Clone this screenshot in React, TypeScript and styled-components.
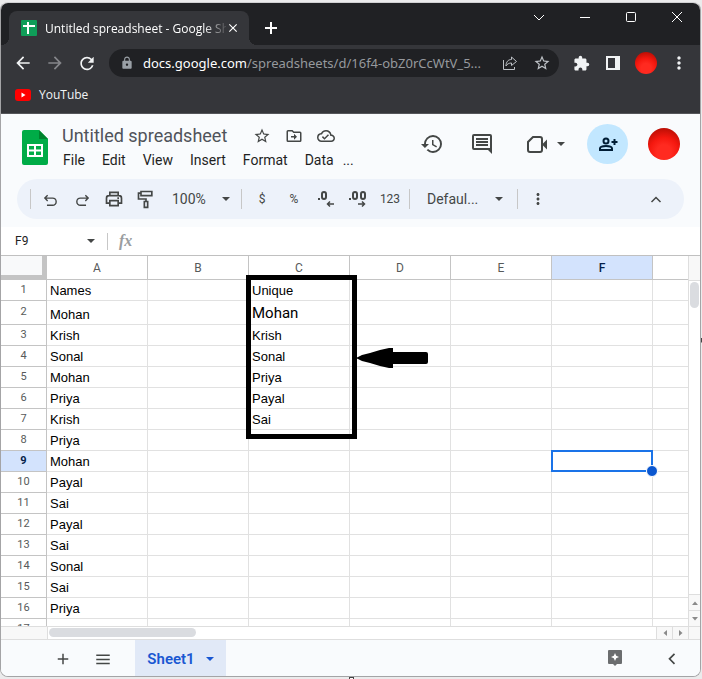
import React from "react";
import styled, { createGlobalStyle, css } from "styled-components";
import {
  MdAdd,
  MdArrowBack,
  MdArrowForward,
  MdClose,
  MdExtension,
  MdHistory,
  MdLock,
  MdMoreVert,
  MdOutlineCloudDone,
  MdRefresh,
  MdStarBorder,
} from "react-icons/md";

const UI = `"Open Sans", "Noto Sans", sans-serif`;
const ROBOTO = `Roboto, "Liberation Sans", sans-serif`;
const ARIAL = `"Liberation Sans", Arial, sans-serif`;

const GlobalStyle = createGlobalStyle`
  * { box-sizing: border-box; }
  body { margin: 0; background: #ebebec; font-family: ${ROBOTO}; }
  button, input { font: inherit; color: inherit; }
`;

const Desktop = styled.div`
  position: relative;
  display: flex;
  height: 100vh;
  min-height: 400px;
  padding: 2px 1px 2px 0;
`;

const CropHandle = styled.span<{ $side: "right" | "bottom" }>`
  position: absolute;
  border: 1px solid #444;
  background: #fff;
  ${(p) =>
    p.$side === "right"
      ? css`right: -4px; top: 50%; width: 5px; height: 5px; margin-top: -2px; clip-path: inset(0 4px 0 0);`
      : css`left: 50%; bottom: -3px; width: 5px; height: 5px; margin-left: -2px; clip-path: inset(0 0 3px 0);`}
`;

const Window = styled.div`
  flex: 1;
  min-width: 0;
  display: flex;
  flex-direction: column;
  border: 1px solid #a4a4a6;
  border-top-color: #d0d0d2;
  border-radius: 8px;
  overflow: hidden;
  background: #fff;
`;

const Plain = styled.button`
  display: inline-flex;
  align-items: center;
  justify-content: center;
  flex: none;
  margin: 0;
  padding: 0;
  border: 0;
  background: none;
  svg { display: block; }
`;

/* ---------- browser chrome ---------- */

const TabStrip = styled.div`
  flex: none;
  display: flex;
  height: 42px;
  padding-left: 8px;
  background: #202124;
  color: #fff;
`;

const Tab = styled.div`
  position: relative;
  display: flex;
  align-items: center;
  width: 240px;
  height: 34px;
  margin-top: 8px;
  padding: 0 9px 0 12px;
  border-radius: 8px 8px 0 0;
  background: #35363a;
  font: 12px ${UI};
  &::before, &::after {
    content: "";
    position: absolute;
    bottom: 0;
    width: 8px;
    height: 8px;
  }
  &::before { left: -8px; background: radial-gradient(circle at 0 0, transparent 8px, #35363a 8px); }
  &::after { right: -8px; background: radial-gradient(circle at 100% 0, transparent 8px, #35363a 8px); }
`;

const TabTitle = styled.span`
  flex: 1;
  margin-left: 8px;
  overflow: hidden;
  white-space: nowrap;
  mask-image: linear-gradient(to right, #000 158px, transparent 184px);
`;

const NewTab = styled(Plain)`
  width: 28px;
  margin: 8px 0 0 8px;
`;

const WindowButtons = styled.div`
  display: flex;
  margin-left: auto;
`;

const WindowButton = styled(Plain)`
  width: 46px;
  height: 28px;
`;

const NavBar = styled.div`
  flex: none;
  display: flex;
  align-items: center;
  height: 36px;
  padding: 0 11px 0 12px;
  background: #35363a;
  color: #f1f3f4;
`;

const NavButton = styled(Plain)<{ $dim?: boolean }>`
  width: 20px;
  height: 28px;
  margin-right: 12px;
  color: ${(p) => (p.$dim ? "#85868a" : "#f1f3f4")};
`;

const AddressBar = styled.div`
  flex: 1;
  min-width: 0;
  display: flex;
  align-items: center;
  height: 28px;
  margin-right: 12px;
  padding: 0 7px 0 11px;
  border-radius: 14px;
  background: #202124;
  color: #9aa0a6;
`;

const Address = styled.span`
  flex: 1;
  overflow: hidden;
  white-space: nowrap;
  margin: 0 8px 0 9px;
  font: 13px "Noto Sans", ${UI};
  color: #96999d;
  b { font-weight: 400; color: #fff; }
`;

const AddressButton = styled(Plain)`
  width: 20px;
  margin-left: 12px;
  color: #bdc1c6;
  &:first-of-type { margin-left: 0; }
`;

const NavTools = styled.div`
  display: flex;
  align-items: center;
  gap: 12px;
`;

const NavTool = styled(Plain)`
  width: 20px;
`;

const Avatar = styled.button<{ $size: number }>`
  flex: none;
  width: ${(p) => p.$size}px;
  height: ${(p) => p.$size}px;
  padding: 0;
  border: 0;
  border-radius: 50%;
  background: radial-gradient(circle at 50% 75%, #ff2a20 0 25%, #f5180f 50%, #b80e04 85%);
`;

const Bookmarks = styled.div`
  flex: none;
  display: flex;
  align-items: center;
  height: 33px;
  padding: 0 14px 5px;
  background: #35363a;
  border-bottom: 1px solid #55565a;
`;

const Bookmark = styled.a`
  display: flex;
  align-items: center;
  gap: 8px;
  color: #f1f3f4;
  text-decoration: none;
  font: 12px ${UI};
`;

/* ---------- document header ---------- */

const DocHead = styled.header`
  flex: none;
  display: flex;
  height: 65px;
  padding: 0 20px 0 21px;
  background: #f9fbfd;
  color: #444746;
`;

const DocInfo = styled.div`
  flex: none;
  margin: 10px 0 0 14px;
`;

const TitleRow = styled.div`
  display: flex;
  align-items: center;
  height: 24px;
`;

const Title = styled.h1`
  margin: 0 26px 2px 0;
  font: 400 18px ${ROBOTO};
  color: #50535a;
`;

const TitleIcons = styled.div`
  display: flex;
  gap: 14px;
`;

const Menus = styled.nav`
  display: flex;
  align-items: center;
  gap: 17px;
  height: 24px;
  margin-left: 1px;
  font-size: 14px;
  color: #1f1f1f;
`;

const MoreMenus = styled(Plain)`
  margin-left: -8px;
`;

const HeadActions = styled.div`
  display: flex;
  align-items: flex-start;
  margin: 10px 0 0 auto;
`;

const HeadAction = styled(Plain)<{ $wide?: boolean }>`
  width: ${(p) => (p.$wide ? 45 : 24)}px;
  height: 40px;
  justify-content: ${(p) => (p.$wide ? "flex-end" : "center")};
  gap: 8px;
  margin-right: ${(p) => (p.$wide ? 22 : 26)}px;
`;

const Share = styled(Plain)`
  width: 41px;
  height: 40px;
  margin-right: 20px;
  border-radius: 50%;
  background: #c2e7ff;
  color: #001d35;
`;

const HeadAvatar = styled(Avatar)`
  margin-top: 4px;
`;

const ToolWrap = styled.div`
  flex: none;
  padding: 0 16px 8px;
  background: #f9fbfd;
`;

const ToolBar = styled.div`
  display: flex;
  align-items: center;
  height: 40px;
  padding: 0 18px 0 13px;
  border-radius: 20px;
  background: #edf2fa;
  color: #444746;
  font-size: 14px;
`;

const Rule = styled.span<{ $height: number }>`
  flex: none;
  width: 1px;
  height: ${(p) => p.$height}px;
  background: #c7c7c7;
`;

const Tool = styled(Plain)<{ $small?: boolean }>`
  width: 32px;
  height: 32px;
  ${(p) => p.$small && css`font-size: 12px;`}
`;

const ToolGroup = styled.div<{ $pad?: number }>`
  display: flex;
  align-items: center;
  padding: 0 ${(p) => p.$pad ?? 4}px;
`;

const Picker = styled(Plain)<{ $width: number }>`
  justify-content: space-between;
  width: ${(p) => p.$width}px;
  height: 32px;
`;

const Collapse = styled(Tool)`
  width: 20px;
  margin-left: auto;
`;

const FormulaBar = styled.div`
  flex: none;
  display: flex;
  align-items: center;
  height: 28px;
  padding-left: 14px;
  color: #444746;
`;

const NameBox = styled.input`
  width: 72px;
  padding: 0;
  border: 0;
  outline: 0;
  background: none;
  font: 12px ${ROBOTO};
  color: #222;
`;

const FormulaRule = styled(Rule)`
  margin: 0 11px 0 12px;
`;

const FormulaInput = styled.input`
  flex: 1;
  min-width: 0;
  border: 0;
  outline: 0;
  background: none;
`;

const Fx = styled.label`
  font: italic 700 16px "Liberation Serif", serif;
  color: #9a9da0;
`;

/* ---------- sheet ---------- */

const SheetArea = styled.main`
  flex: 1;
  min-height: 0;
  display: grid;
  grid-template-columns: minmax(0, 1fr) 11px;
  grid-template-rows: minmax(0, 1fr) 14px;
  border-top: 1px solid #c0c0c0;
`;

const Viewport = styled.div`
  position: relative;
  overflow: hidden;
  border-right: 1px solid #dedede;
`;

const Table = styled.table`
  width: 100%;
  table-layout: fixed;
  border-collapse: separate;
  border-spacing: 0;
`;

const RowCol = styled.col`
  width: 46px;
`;

const DataCol = styled.col`
  width: 101px;
`;

const Corner = styled.td`
  height: 24px;
  padding: 0;
  background: #f8f9fa;
  border: solid #c4c4c4;
  border-width: 0 5px 5px 0;
`;

const ColHead = styled.th<{ $active: boolean }>`
  height: 24px;
  padding: 0;
  border: solid #c4c4c4;
  border-width: 0 1px 1px 0;
  background: ${(p) => (p.$active ? "#d3e3fd" : "#fff")};
  color: ${(p) => (p.$active ? "#041e49" : "#575a5a")};
  font: ${(p) => (p.$active ? 500 : 400)} 12px ${ROBOTO};
  &:last-child { border-right: 0; }
`;

const RowHead = styled.th<{ $active: boolean }>`
  padding: 0 0 1px;
  border: solid #c4c4c4;
  border-width: 0 1px 1px 0;
  background: ${(p) => (p.$active ? "#d3e3fd" : "#fff")};
  color: ${(p) => (p.$active ? "#041e49" : "#575a5a")};
  font: ${(p) => (p.$active ? 700 : 400)} 11px/16px ${ROBOTO};
`;

const Row = styled.tr<{ $tall: boolean }>`
  height: ${(p) => (p.$tall ? 24 : 21)}px;
`;

const Cell = styled.td<{ $large?: boolean }>`
  position: relative;
  padding: 0 3px;
  vertical-align: bottom;
  border: solid #e1e1e1;
  border-width: 0 1px 1px 0;
  font: 13px/18px ${ARIAL};
  color: #000;
  ${(p) => p.$large && css`font: 15px/22px ${ROBOTO};`}
  &:last-child { border-right: 0; }
`;

const Selection = styled.div`
  position: absolute;
  z-index: 1;
  inset: -1px;
  border: 2px solid #1a73e8;
  &::after {
    content: "";
    position: absolute;
    right: -7px;
    bottom: -7px;
    width: 10px;
    height: 10px;
    border: 1px solid #fff;
    border-radius: 50%;
    background: #0b57d0;
  }
`;

const Highlight = styled.div`
  position: absolute;
  z-index: 2;
  left: 245px;
  top: 19px;
  width: 111px;
  height: 164px;
  border: 5px solid #000;
`;

const Pointer = styled.svg`
  position: absolute;
  left: 100%;
  top: 68px;
  margin-left: 4px;
`;

const VScroll = styled.div`
  display: flex;
  flex-direction: column;
  &::before {
    content: "";
    height: 24px;
    background: #f8f8f8;
    border-bottom: 1px solid #dedede;
  }
`;

const VThumb = styled.div`
  height: 26px;
  margin: 1px 1px auto;
  border-radius: 5px;
  background: #dadce0;
`;

const HScroll = styled.div`
  display: flex;
  border-top: 1px solid #dedede;
  border-bottom: 1px solid #dedede;
  border-right: 1px solid #dedede;
  &::before {
    content: "";
    width: 46px;
    background: #f8f8f8;
    border-right: 1px solid #dedede;
  }
`;

const HThumb = styled.div`
  width: 147px;
  height: 9px;
  margin: 1px auto 0 1px;
  border-radius: 5px;
  background: #dadce0;
`;

const ScrollButton = styled(Plain)<{ $vertical?: boolean }>`
  background: #f8f8f8;
  color: #8a8a8a;
  ${(p) =>
    p.$vertical
      ? css`height: 16px; border-top: 1px solid #dedede;`
      : css`width: 16px; border-left: 1px solid #dedede;`}
`;

const ScrollCorner = styled.div`
  background: #f8f8f8;
  border: solid #dedede;
  border-width: 1px 0 1px;
`;

const Footer = styled.footer`
  flex: none;
  display: flex;
  align-items: center;
  height: 36px;
  padding: 0 18px 0 50px;
  background: #f9fbfd;
  color: #444746;
`;

const FooterButton = styled(Plain)`
  width: 24px;
  height: 36px;
  margin-right: 16px;
  padding-top: 2px;
`;

const SheetTab = styled(Plain)`
  align-self: stretch;
  gap: 11px;
  width: 91px;
  margin: 0 auto 0 4px;
  padding-top: 2px;
  background: #e1e9f7;
  color: #1957d2;
  font: 600 15px ${ROBOTO};
`;

const Explore = styled(Plain)`
  width: 24px;
  margin-right: 35px;
`;

/* ---------- drawings ---------- */

type IconProps = { size?: number; d: string; fill?: boolean; width?: number };

const Glyph = ({ size = 20, d, fill, width = 2 }: IconProps) => (
  <svg
    width={size}
    height={size}
    viewBox="0 0 24 24"
    fill={fill ? "currentColor" : "none"}
    stroke={fill ? "none" : "currentColor"}
    strokeWidth={width}
    fillRule="evenodd"
    aria-hidden
  >
    <path d={d} />
  </svg>
);

const Caret = () => (
  <svg width="8" height="4" viewBox="0 0 8 4" fill="currentColor" aria-hidden>
    <path d="M0 0h8L4 4z" />
  </svg>
);

const MiniArrow = ({ turn }: { turn: number }) => (
  <svg width="6" height="6" viewBox="0 0 6 6" fill="currentColor" aria-hidden>
    <path d="M0 5h6L3 1.500z" transform={`rotate(${turn} 3 3)`} />
  </svg>
);

const TabIcon = () => (
  <svg width="16" height="16" viewBox="0 0 16 16" aria-hidden>
    <rect width="16" height="16" rx="1" fill="#0f9d58" />
    <path d="M2 6h12M7 2v12" stroke="#fff" strokeWidth="2" />
  </svg>
);

const YouTubeIcon = () => (
  <svg width="16" height="12" viewBox="0 0 16 12" aria-hidden>
    <rect width="16" height="12" rx="3" fill="#f00" />
    <path d="M6.500 3.500v5l4-2.500z" fill="#fff" />
  </svg>
);

const SheetsLogo = styled.svg`
  flex: none;
  margin-top: 16px;
`;

const winIcons: [string, string][] = [
  ["Search tabs", "M3 6l5 5 5-5"],
  ["Minimize", "M3 8.500h10"],
  ["Maximize", "M4.500 3.500h7a1 1 0 0 1 1 1v7a1 1 0 0 1-1 1h-7a1 1 0 0 1-1-1v-7a1 1 0 0 1 1-1z"],
  ["Close window", "M3 3l10 10M13 3L3 13"],
];

const colA = [
  "Names", "Mohan", "Krish", "Sonal", "Mohan", "Priya", "Krish", "Priya", "Mohan",
  "Payal", "Sai", "Payal", "Sai", "Sonal", "Sai", "Priya", "",
];
const colC = ["Unique", "Mohan", "Krish", "Sonal", "Priya", "Payal", "Sai"];
const letters = ["A", "B", "C", "D", "E", "F", ""];

const BrowserChrome = () => (
  <>
    <TabStrip>
      <Tab>
        <TabIcon />
        <TabTitle>Untitled spreadsheet - Google Sh</TabTitle>
        <Plain aria-label="Close tab"><MdClose size={14} /></Plain>
      </Tab>
      <NewTab aria-label="New tab">
        <Glyph size={16} d="M12 3v18M3 12h18" width={3} />
      </NewTab>
      <WindowButtons>
        {winIcons.map(([label, d]) => (
          <WindowButton key={label} aria-label={label}>
            <svg width="16" height="16" viewBox="0 0 16 16" fill="none" stroke="#fff" aria-hidden>
              <path d={d} />
            </svg>
          </WindowButton>
        ))}
      </WindowButtons>
    </TabStrip>
    <NavBar>
      <NavButton aria-label="Back"><MdArrowBack size={20} /></NavButton>
      <NavButton aria-label="Forward" $dim><MdArrowForward size={20} /></NavButton>
      <NavButton aria-label="Reload"><MdRefresh size={21} /></NavButton>
      <AddressBar>
        <MdLock size={14} />
        <Address><b>docs.google.com</b>/spreadsheets/d/16f4-obZ0rCcWtV_5...</Address>
        <AddressButton aria-label="Share this page">
          <svg width="16" height="16" viewBox="0 0 16 16" fill="none" stroke="currentColor" aria-hidden>
            <path d="M1.500 5v9.500h11V12" />
            <path d="M9.500 2l5 4.500-5 4V8C7 8 5 9 4 11c0-4 2-6.500 5.500-6.500z" strokeLinejoin="round" />
          </svg>
        </AddressButton>
        <AddressButton aria-label="Bookmark"><MdStarBorder size={18} /></AddressButton>
      </AddressBar>
      <NavTools>
        <NavTool aria-label="Extensions"><MdExtension size={17} /></NavTool>
        <NavTool aria-label="Side panel">
          <svg width="14" height="14" viewBox="0 0 14 14" fill="currentColor" fillRule="evenodd" aria-hidden>
            <path d="M0 0h14v14H0zM2 2v10h7V2z" />
          </svg>
        </NavTool>
        <Avatar $size={22} aria-label="Profile" />
        <NavTool aria-label="Browser menu"><MdMoreVert size={20} /></NavTool>
      </NavTools>
    </NavBar>
    <Bookmarks>
      <Bookmark href="#youtube"><YouTubeIcon />YouTube</Bookmark>
    </Bookmarks>
  </>
);

const DocHeader = () => (
  <DocHead>
    <SheetsLogo width="26" height="35" viewBox="0 0 26 35" aria-hidden>
      <path d="M2 0h15l9 9v24a2 2 0 0 1-2 2H2a2 2 0 0 1-2-2V2a2 2 0 0 1 2-2z" fill="#00ac47" />
      <path d="M17 0l9 9h-9z" fill="#00832d" />
      <path d="M5 14h16v13H5zM7 16v3.500h5V16zM14 16v3.500h5V16zM7 21.500V25h5v-3.500zM14 21.500V25h5v-3.500z" fill="#fff" fillRule="evenodd" />
    </SheetsLogo>
    <DocInfo>
      <TitleRow>
        <Title>Untitled spreadsheet</Title>
        <TitleIcons>
          <Plain aria-label="Star"><MdStarBorder size={18} /></Plain>
          <Plain aria-label="Move">
            <Glyph size={18} fill d="M20 6h-8l-2-2H4a2 2 0 0 0-2 2v12a2 2 0 0 0 2 2h16a2 2 0 0 0 2-2V8a2 2 0 0 0-2-2zm0 12H4V6h5.200l2 2H20zM12 9l4 4-4 4v-3H8v-2h4z" />
          </Plain>
          <Plain aria-label="Document status"><MdOutlineCloudDone size={18} /></Plain>
        </TitleIcons>
      </TitleRow>
      <Menus>
        {["File", "Edit", "View", "Insert", "Format", "Data"].map((m) => (
          <Plain key={m}>{m}</Plain>
        ))}
        <MoreMenus aria-label="More menus">...</MoreMenus>
      </Menus>
    </DocInfo>
    <HeadActions>
      <HeadAction aria-label="Version history"><MdHistory size={24} /></HeadAction>
      <HeadAction aria-label="Comments">
        <Glyph size={24} fill d="M22 4a2 2 0 0 0-2-2H4a2 2 0 0 0-2 2v12a2 2 0 0 0 2 2h14l4 4zM4 4h16v12H4zM6 6h12v2H6zM6 9h12v2H6zM6 12h12v2H6z" />
      </HeadAction>
      <HeadAction $wide aria-label="Join a call">
        <svg width="24" height="24" viewBox="0 0 24 24" fill="none" stroke="currentColor" strokeWidth="2" aria-hidden>
          <path d="M8 5h7a2 2 0 0 1 2 2v11a2 2 0 0 1-2 2H5a2 2 0 0 1-2-2v-8z" />
          <path d="M17 12.500l5-5v10z" fill="currentColor" stroke="none" />
        </svg>
        <Caret />
      </HeadAction>
      <Share aria-label="Share">
        <svg width="20" height="20" viewBox="0 0 20 20" fill="none" stroke="currentColor" strokeWidth="2" aria-hidden>
          <circle cx="8" cy="7" r="2.500" />
          <path d="M2 16v-1.500C2 12.500 5 12 8 12s6 .5 6 2.500V16zM16.500 5v6M13.500 8h6" />
        </svg>
      </Share>
      <HeadAvatar $size={32} aria-label="Account" />
    </HeadActions>
  </DocHead>
);

const Tools = () => (
  <ToolWrap>
    <ToolBar>
      <Rule $height={20} />
      <ToolGroup $pad={3}>
        <Tool aria-label="Undo"><Glyph size={17} d="M8 6l-4 4 4 4M4 10h11a5 5 0 0 1 0 10H7" /></Tool>
        <Tool aria-label="Redo"><Glyph size={17} d="M16 6l4 4-4 4M20 10H9A5 5 0 0 0 9 20h8" /></Tool>
        <Tool aria-label="Print"><Glyph size={20} d="M7 8V4h10v4M6 17H3v-6a3 3 0 0 1 3-3h12a3 3 0 0 1 3 3v6h-3M7 14h10v6H7zM16 11h2" /></Tool>
        <Tool aria-label="Paint format"><Glyph size={20} d="M6 3h13v5H6zM6 5H3v7h9v3M10 15h4v7h-4z" /></Tool>
      </ToolGroup>
      <ToolGroup $pad={7}>
        <Picker $width={58}>100%<Caret /></Picker>
      </ToolGroup>
      <ToolGroup><Rule $height={20} /></ToolGroup>
      <Tool $small>$</Tool>
      <Tool $small>%</Tool>
      <Tool aria-label="Decrease decimal places">
        <svg width="18" height="18" viewBox="0 0 18 18" fill="none" stroke="currentColor" strokeWidth="2" aria-hidden>
          <path d="M1 9h2" />
          <rect x="5" y="2" width="4" height="7" rx="2" />
          <path d="M17 14h-6M13 11.500L10.500 14l2.500 2.500" strokeWidth="1.500" />
        </svg>
      </Tool>
      <Tool aria-label="Increase decimal places">
        <svg width="18" height="18" viewBox="0 0 18 18" fill="none" stroke="currentColor" strokeWidth="2" aria-hidden>
          <path d="M0 9h2" />
          <rect x="4" y="2" width="4" height="7" rx="2" />
          <rect x="12" y="2" width="4" height="7" rx="2" />
          <path d="M9 14h6M13 11.500l2.500 2.500-2.500 2.500" strokeWidth="1.500" />
        </svg>
      </Tool>
      <Tool $small>123</Tool>
      <ToolGroup $pad={3}><Rule $height={20} /></ToolGroup>
      <ToolGroup $pad={14}>
        <Picker $width={76}>Defaul...<Caret /></Picker>
      </ToolGroup>
      <Rule $height={20} />
      <ToolGroup><Tool aria-label="More"><MdMoreVert size={18} /></Tool></ToolGroup>
      <Collapse aria-label="Hide the menus"><Glyph size={18} d="M6 16l6-6 6 6" /></Collapse>
    </ToolBar>
  </ToolWrap>
);

const Grid = () => (
  <Table>
    <colgroup>
      <RowCol />
      {letters.slice(0, 6).map((l) => <DataCol key={l} />)}
      <col />
    </colgroup>
    <thead>
      <tr>
        <Corner />
        {letters.map((l) => <ColHead key={l} $active={l === "F"} scope="col">{l}</ColHead>)}
      </tr>
    </thead>
    <tbody>
      {colA.map((name, i) => (
        <Row key={i} $tall={i === 1}>
          <RowHead $active={i === 8} scope="row">{i + 1}</RowHead>
          <Cell>{name}</Cell>
          <Cell />
          <Cell $large={i === 1}>{colC[i]}</Cell>
          <Cell />
          <Cell />
          <Cell>{i === 8 && <Selection />}</Cell>
          <Cell />
        </Row>
      ))}
    </tbody>
  </Table>
);

export default function App() {
  return (
    <Desktop>
      <GlobalStyle />
      <Window>
        <BrowserChrome />
        <DocHeader />
        <Tools />
        <FormulaBar>
          <NameBox aria-label="Name box" defaultValue="F9" />
          <Plain aria-label="Named ranges"><Caret /></Plain>
          <FormulaRule $height={17} />
          <Fx htmlFor="formula">fx</Fx>
          <FormulaInput id="formula" />
        </FormulaBar>
        <SheetArea>
          <Viewport>
            <Grid />
            <Highlight>
              <Pointer width="73" height="20" viewBox="0 0 73 20" aria-hidden>
                <path d="M0 10l6-3 8-2 10-3 9-2h4v4h33a2 2 0 0 1 2 2v8a2 2 0 0 1-2 2H37v4h-4l-9-2-10-3-8-2z" />
              </Pointer>
            </Highlight>
          </Viewport>
          <VScroll>
            <VThumb />
            <ScrollButton $vertical aria-label="Scroll up"><MiniArrow turn={0} /></ScrollButton>
            <ScrollButton $vertical aria-label="Scroll down"><MiniArrow turn={180} /></ScrollButton>
          </VScroll>
          <HScroll>
            <HThumb />
            <ScrollButton aria-label="Scroll left"><MiniArrow turn={-90} /></ScrollButton>
            <ScrollButton aria-label="Scroll right"><MiniArrow turn={90} /></ScrollButton>
          </HScroll>
          <ScrollCorner />
        </SheetArea>
        <Footer>
          <FooterButton aria-label="Add sheet"><MdAdd size={18} /></FooterButton>
          <FooterButton aria-label="All sheets"><Glyph size={18} d="M3 7h18M3 12.500h18M3 18h18" /></FooterButton>
          <SheetTab>Sheet1<Caret /></SheetTab>
          <Explore aria-label="Explore">
            <svg width="14" height="16" viewBox="0 0 14 16" aria-hidden>
              <path d="M1 0h12a1 1 0 0 1 1 1v12a1 1 0 0 1-1 1H9l-2 2-2-2H1a1 1 0 0 1-1-1V1a1 1 0 0 1 1-1z" fill="#6b6d6f" />
              <path d="M7 3l1.200 2.800L11 7 8.200 8.200 7 11 5.800 8.200 3 7l2.800-1.200z" fill="#fff" />
            </svg>
          </Explore>
          <Plain aria-label="Show side panel"><Glyph size={20} d="M15 7l-6 6 6 6" /></Plain>
        </Footer>
      </Window>
      <CropHandle $side="right" />
      <CropHandle $side="bottom" />
    </Desktop>
  );
}
